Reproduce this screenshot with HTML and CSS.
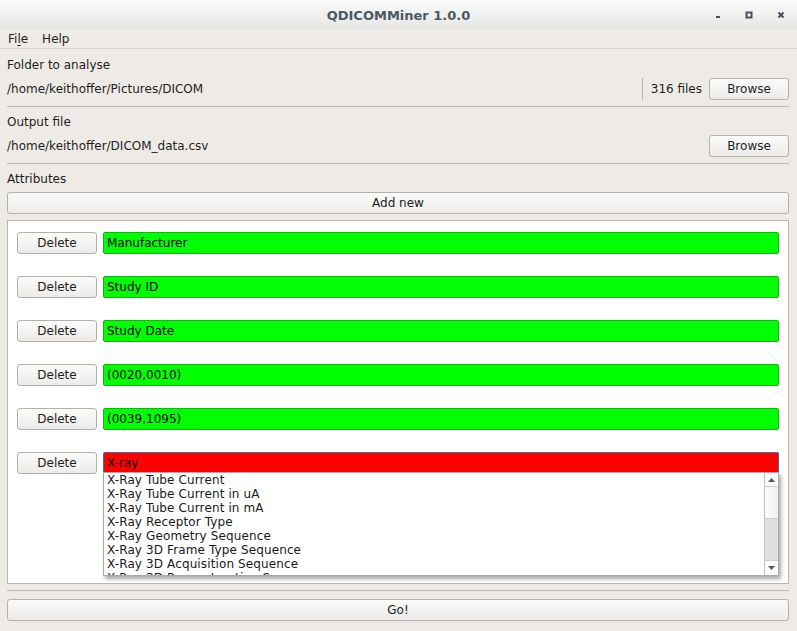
FILE: index.html
```html
<!DOCTYPE html>
<html>
<head>
<meta charset="utf-8">
<title>QDICOMMiner 1.0.0</title>
<link rel="stylesheet" href="styles.css">
</head>
<body>
<div class="window">
  <div class="titlebar">
    <div class="spacer"></div>
    <div class="title">QDICOMMiner 1.0.0</div>
    <div class="controls">
      <svg class="ctl" width="8" height="8" viewBox="0 0 8 8"><rect x="3" y="5" width="4" height="2" fill="#4a5058"/></svg>
      <svg class="ctl" width="8" height="8" viewBox="0 0 8 8"><rect x="1.5" y="1.5" width="5" height="5" fill="none" stroke="#4a5058" stroke-width="2"/></svg>
      <svg class="ctl" width="8" height="8" viewBox="0 0 8 8"><path d="M1.5 1.5 L6.5 6.5 M6.5 1.5 L1.5 6.5" stroke="#4a5058" stroke-width="2"/></svg>
    </div>
  </div>
  <div class="menubar">
    <span class="menu">Fi<u>l</u>e</span>
    <span class="menu">Help</span>
  </div>
  <div class="content">
    <div class="label">Folder to analyse</div>
    <div class="row">
      <div class="path">/home/keithoffer/Pictures/DICOM</div>
      <div class="count">316 files</div>
      <button class="btn browse">Browse</button>
    </div>
    <div class="sep"></div>
    <div class="label">Output file</div>
    <div class="row">
      <div class="path">/home/keithoffer/DICOM_data.csv</div>
      <button class="btn browse">Browse</button>
    </div>
    <div class="sep"></div>
    <div class="label">Attributes</div>
    <button class="btn wide">Add new</button>
    <div class="scrollarea">
      <div class="attr">
        <button class="btn del">Delete</button>
        <div class="field ok">Manufacturer</div>
      </div>
      <div class="attr">
        <button class="btn del">Delete</button>
        <div class="field ok">Study ID</div>
      </div>
      <div class="attr">
        <button class="btn del">Delete</button>
        <div class="field ok">Study Date</div>
      </div>
      <div class="attr">
        <button class="btn del">Delete</button>
        <div class="field ok">(0020,0010)</div>
      </div>
      <div class="attr">
        <button class="btn del">Delete</button>
        <div class="field ok">(0039,1095)</div>
      </div>
      <div class="attr">
        <button class="btn del">Delete</button>
        <div class="combo">
          <div class="field bad">X-ray</div>
          <div class="popup">
            <div class="items">
              <div class="item">X-Ray Tube Current</div>
              <div class="item">X-Ray Tube Current in uA</div>
              <div class="item">X-Ray Tube Current in mA</div>
              <div class="item">X-Ray Receptor Type</div>
              <div class="item">X-Ray Geometry Sequence</div>
              <div class="item">X-Ray 3D Frame Type Sequence</div>
              <div class="item">X-Ray 3D Acquisition Sequence</div>
              <div class="item">X-Ray 3D Reconstruction Sequence</div>
            </div>
            <div class="vscroll">
              <div class="arrow up"><svg width="7" height="4" viewBox="0 0 7 4"><path d="M0 4 L3.5 0 L7 4 Z" fill="#555"/></svg></div>
              <div class="thumb"></div>
              <div class="track"></div>
              <div class="arrow down"><svg width="7" height="4" viewBox="0 0 7 4"><path d="M0 0 L3.5 4 L7 0 Z" fill="#555"/></svg></div>
            </div>
          </div>
        </div>
      </div>
    </div>
    <div class="sep sep-go"></div>
    <button class="btn wide go">Go!</button>
  </div>
</div>
</body>
</html>
```

FILE: styles.css
```css
* { box-sizing: border-box; }

html, body {
  margin: 0;
  padding: 0;
  width: 797px;
  height: 631px;
  overflow: hidden;
}

body {
  background: #eeebe7;
  font-family: "DejaVu Sans", sans-serif;
  font-size: 12px;
  color: #1e1e1e;
}

.window {
  display: flex;
  flex-direction: column;
  height: 631px;
}

.titlebar {
  height: 29px;
  display: grid;
  grid-template-columns: 1fr auto 1fr;
  align-items: center;
  background: linear-gradient(#fbfbfb, #e6e6e5);
}

.title {
  font-weight: bold;
  font-size: 13px;
  color: #4b5963;
  padding-top: 1px;
}

.controls {
  display: flex;
  justify-content: flex-end;
  align-items: center;
  gap: 24px;
  padding-right: 12px;
}

.ctl { display: block; }

.menubar {
  height: 20px;
  display: flex;
  align-items: flex-start;
  padding-left: 1px;
  border-bottom: 1px solid #d9d5d0;
}

.menu {
  padding: 0 7px;
  line-height: 21px;
  height: 19px;
}

.menu u {
  text-decoration-thickness: 1px;
  text-underline-offset: 2px;
}

.content {
  display: flex;
  flex-direction: column;
  padding: 8px 8px 0 7px;
}

.label {
  line-height: 17px;
  height: 15px;
  margin-bottom: 6px;
}

.row {
  display: flex;
  align-items: center;
  height: 22px;
}

.path {
  flex: 1;
}

.count {
  border-left: 1px solid #b9b5af;
  height: 22px;
  line-height: 22px;
  padding-left: 8px;
  margin-right: 7px;
}

.btn {
  font-family: "DejaVu Sans", sans-serif;
  font-size: 12px;
  color: #1e1e1e;
  height: 22px;
  border: 1px solid #b4b0aa;
  border-radius: 3px;
  background: linear-gradient(#fbfbfa, #ecebe9);
  padding: 0;
  margin: 0;
}

.browse { width: 80px; }

.sep {
  height: 1px;
  background: #bcb8b2;
  margin: 6px 0 7px;
}

.wide {
  width: 100%;
}

.scrollarea {
  margin-top: 6px;
  height: 364px;
  background: #ffffff;
  border: 1px solid #bab6b0;
  padding: 11px 9px 0 9px;
  display: flex;
  flex-direction: column;
  gap: 22px;
}

.attr {
  display: flex;
  gap: 6px;
  height: 22px;
}

.del { width: 80px; flex: none; }

.field {
  flex: 1;
  height: 22px;
  line-height: 20px;
  padding-left: 3px;
  border-radius: 2px;
  color: #000;
}

.ok {
  background: #00ff00;
  border: 1px solid #12b512;
}

.combo {
  flex: 1;
  position: relative;
  display: flex;
}

.bad {
  background: #ff0000;
  border: 1px solid #3a73a0;
  border-bottom: none;
  border-radius: 2px 2px 0 0;
  height: 21px;
}

.popup {
  position: absolute;
  left: 0;
  top: 20px;
  width: 676px;
  height: 104px;
  background: #ffffff;
  border: 1px solid #a9a9a9;
  box-shadow: 2px 3px 4px rgba(0, 0, 0, 0.35);
  display: flex;
  overflow: hidden;
}

.items {
  flex: 1;
  font-size: 12px;
  line-height: 14px;
  letter-spacing: 0.12px;
  padding-left: 3px;
  color: #1a1a1a;
  white-space: nowrap;
  overflow: hidden;
}

.vscroll {
  width: 14px;
  border-left: 1px solid #c4c2bf;
  display: flex;
  flex-direction: column;
}

.arrow {
  height: 14px;
  display: flex;
  align-items: center;
  justify-content: center;
  background: #fbfbfb;
}

.arrow svg { display: block; }

.up { border-bottom: 1px solid #cfcdca; }
.down { border-top: 1px solid #cfcdca; height: 15px; }

.thumb {
  height: 32px;
  background: linear-gradient(90deg, #fdfdfd, #f1f0ef);
  border-bottom: 1px solid #cfcdca;
}

.track {
  flex: 1;
  background: #e1e0de;
}

.sep-go {
  margin: 6px 0 8px;
}
```
